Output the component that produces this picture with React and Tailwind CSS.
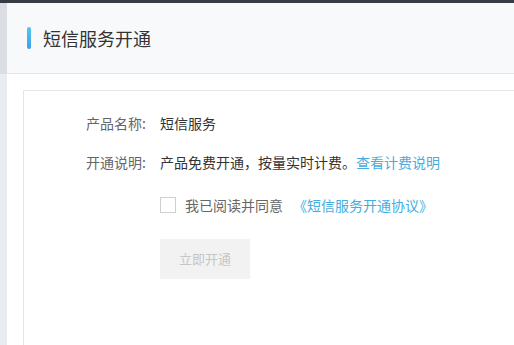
import React from "react";

const FONT = { fontFamily: '"Noto Sans CJK SC", "Noto Sans", sans-serif' };

function FormRow({ label, children, className = "" }) {
    return (
        <div className={`flex items-center h-5 text-[14px] leading-5 ${className}`}>
            <div className="w-[122px] text-right text-[#666]">{label}</div>
            <div className="ml-[14px] text-[#333] whitespace-nowrap">{children}</div>
        </div>
    );
}

export default function App() {
    return (
        <div className="h-[345px] w-[514px] overflow-hidden flex flex-col bg-white" style={FONT}>
            {/* top dark strip */}
            <div className="h-[3px] bg-[#363c44] shrink-0" />

            <div className="flex flex-1 min-h-0">
                {/* left sidebar edge */}
                <div className="w-[7px] shrink-0 flex flex-col">
                    <div className="h-[71px] bg-[#dadde2]" />
                    <div className="flex-1 bg-[#e9ecf1]" />
                </div>

                <div className="flex-1 flex flex-col min-w-0">
                    {/* page header */}
                    <div className="h-[71px] shrink-0 bg-[#f8f9fb] border-b border-[#e4e6ea] flex items-center pl-5">
                        <span className="w-1 h-[22px] rounded-sm bg-linear-to-b from-[#56c7e7] to-[#3a9fef]" />
                        <h1 className="ml-3 text-[18px] leading-6 text-[#333] font-normal">短信服务开通</h1>
                    </div>

                    {/* content */}
                    <div className="flex-1 pl-4 pt-4 flex min-h-0">
                        <div className="flex-1 border-t border-l border-[#e6e6e6] pt-[22px]">
                            <FormRow label="产品名称:">短信服务</FormRow>
                            <FormRow label="开通说明:" className="mt-[19px]">
                                产品免费开通，按量实时计费。
                                <a href="#" className="text-[#45acdf]">查看计费说明</a>
                            </FormRow>

                            <div className="flex items-center h-5 mt-[23px] ml-[136px] text-[14px] leading-5 whitespace-nowrap">
                                <span className="w-4 h-4 border border-[#cfcfcf] bg-white" />
                                <span className="ml-[9px] text-[#666]">我已阅读并同意</span>
                                <a href="#" className="ml-[10px] text-[#45acdf]">《短信服务开通协议》</a>
                            </div>

                            <button
                                disabled
                                className="mt-6 ml-[136px] w-[90px] h-10 bg-[#f2f2f2] text-[#c6c6c6] text-[13px] cursor-not-allowed"
                            >
                                立即开通
                            </button>
                        </div>
                    </div>
                </div>
            </div>
        </div>
    );
}
